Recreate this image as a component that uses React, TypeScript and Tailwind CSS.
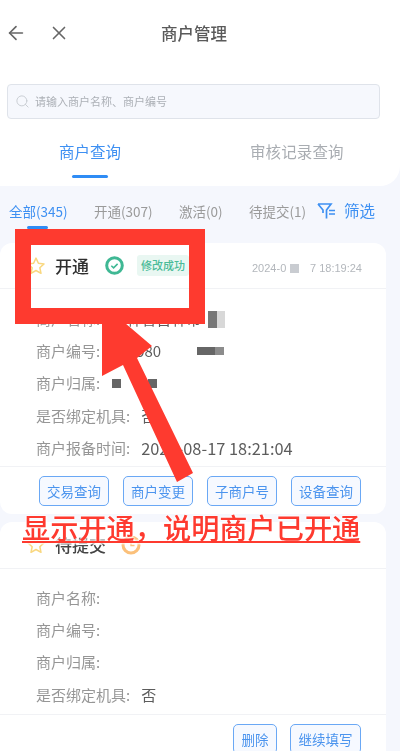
import { ArrowLeft, Search, X } from "lucide-react";

const font = { fontFamily: '"Noto Sans CJK SC", "Noto Sans", sans-serif' };

function Star() {
  return (
    <svg width="20" height="20" viewBox="0 0 24 24" fill="none" stroke="#f9d77e" strokeWidth="1.8" strokeLinejoin="round">
      <path d="M12 2.5l2.9 6.2 6.7.8-5 4.6 1.4 6.7-6-3.4-6 3.4 1.4-6.7-5-4.6 6.7-.8z" />
    </svg>
  );
}

function Row({ label, value, children }: { label: string; value?: string; children?: React.ReactNode }) {
  return (
    <div className="flex items-center h-[32.3px] text-[15px] whitespace-nowrap">
      <span className="text-[#969696]">{label}</span>
      {value && <span className="text-[#5c5c5c] ml-[11px]">{value}</span>}
      {children}
    </div>
  );
}

function Btn({ text, w }: { text: string; w: string }) {
  return (
    <button className={`${w} h-[30px] rounded-[5px] border-[1.5px] border-[#6aa8f5] bg-[#f6f9ff] text-[13.5px] text-[#4b94ee]`}>
      {text}
    </button>
  );
}

export default function App() {
  return (
    <div className="relative w-[400px] h-[751px] overflow-hidden bg-[#f5f7fd]" style={font}>
      <div className="blur-[0.5px]">
        <div className="h-[186px] bg-white rounded-br-[20px] flex flex-col">
          <div className="relative flex items-center h-[66px] px-[5px]">
            <ArrowLeft size={22} strokeWidth={1.8} className="text-[#666]" />
            <X size={22} strokeWidth={1.8} className="text-[#666] ml-[21px]" />
            <span className="absolute left-[161px] text-[16.5px] font-medium text-[#5a5a5a]">商户管理</span>
          </div>
          <div className="mx-[7px] mt-[18px] w-[373px] h-[35px] rounded-[4px] border border-[#dfe3ea] bg-[#f6f8fd] flex items-center pl-[7px]">
            <Search size={15} strokeWidth={1.4} className="text-[#c4c8ce]" />
            <span className="ml-[5px] text-[11px] text-[#acb0b6]">请输入商户名称、商户编号</span>
          </div>
          <div className="flex mt-[19px] text-[15.5px]">
            <div className="w-[180px] flex flex-col items-center">
              <span className="text-[#3e90f2] leading-[26px]">商户查询</span>
              <div className="mt-[11px] w-[36px] h-[3px] rounded-full bg-[#2f8cf5]" />
            </div>
            <span className="ml-[70px] text-[#a9adb2] leading-[26px] tracking-[0.1px]">审核记录查询</span>
          </div>
        </div>

        <div className="flex items-center h-[57px] pb-[7px] text-[13.5px] text-[#9a9a9a] whitespace-nowrap relative">
          <div className="ml-[9px] w-[59px] relative text-[#3e90f2]">
            全部(345)
            <div className="absolute left-[18px] top-[25px] w-[21px] h-[3px] rounded-full bg-[#2f8cf5]" />
          </div>
          <span className="ml-[26px] w-[59px]">开通(307)</span>
          <span className="ml-[26px] w-[44px]">激活(0)</span>
          <span className="ml-[26px] w-[55px]">待提交(1)</span>
          <svg className="ml-[13px]" width="20" height="18" viewBox="0 0 20 18" fill="none" stroke="#3e90f2" strokeWidth="1.7">
            <path d="M1 2h13L9.5 8v8.500M1 2l5 6v3" />
            <path d="M12 8.500h6M12 12h6" />
          </svg>
          <span className="ml-[7px] text-[15.5px] text-[#3e90f2]">筛选</span>
        </div>

        <div className="w-[386px] h-[271px] bg-white rounded-[12px] flex flex-col">
          <div className="h-[46px] flex items-center border-b border-[#f1f2f5] relative">
            <span className="ml-[26px]"><Star /></span>
            <span className="ml-[9px] text-[17px] font-medium text-[#2e2e2e]">开通</span>
            <svg className="ml-[16px]" width="19" height="19" viewBox="0 0 19 19" fill="none">
              <circle cx="9.500" cy="9.500" r="7.800" stroke="#3fb894" strokeWidth="3" />
              <path d="M6.300 9.700l2.300 2.200 4-4" stroke="#3fb894" strokeWidth="1.500" />
            </svg>
            <span className="ml-[13px] w-[52px] h-[21px] rounded-[3px] bg-[#e9f7f2] text-[11px] font-medium text-[#4bbb98] flex items-center justify-center whitespace-nowrap">修改成功</span>
            <span className="absolute left-[252px] top-[17px] text-[11px] leading-[16px] text-[#b3b7bc]" style={{ fontFamily: '"Liberation Sans", sans-serif' }}>
              2024-0
            </span>
            <span className="absolute left-[290px] top-[21px] w-[9px] h-[9px] bg-[#c9ccd1]" />
            <span className="absolute left-[310px] top-[17px] text-[11px] leading-[16px] text-[#b3b7bc]" style={{ fontFamily: '"Liberation Sans", sans-serif' }}>
              7 18:19:24
            </span>
          </div>
          <div className="pl-[36px] pt-[14px] h-[177px]">
            <Row label="商户名称:" value="吉林省吉林市">
              <span className="ml-[7px] w-[9px] h-[17px] bg-[#777]" />
              <span className="w-[8px] h-[17px] bg-[#d8d8d8]" />
            </Row>
            <Row label="商户编号:" value="898980">
              <span className="ml-[36px] w-[18px] h-[8px] bg-[#666]" />
              <span className="w-[9px] h-[8px] bg-[#8c8c8c]" />
            </Row>
            <Row label="商户归属:">
              <span className="ml-[12px] w-[9px] h-[9px] bg-[#666]" />
              <span className="ml-[27px] w-[9px] h-[9px] bg-[#666]" />
            </Row>
            <Row label="是否绑定机具:" value="否" />
            <Row label="商户报备时间:">
              <span className="ml-[11px] text-[16.4px] text-[#5c5c5c]">2024-08-17 18:21:04</span>
            </Row>
          </div>
          <div className="flex-1 border-t border-[#f1f2f5] flex items-start justify-end gap-[14px] pt-[9px] pr-[25px]">
            <Btn text="交易查询" w="w-[70px]" />
            <Btn text="商户变更" w="w-[70px]" />
            <Btn text="子商户号" w="w-[70px]" />
            <Btn text="设备查询" w="w-[70px]" />
          </div>
        </div>

        <div className="mt-[8px] w-[386px] h-[240px] bg-white rounded-t-[12px] flex flex-col">
          <div className="h-[47px] flex items-center border-b border-[#f1f2f5]">
            <span className="ml-[26px]"><Star /></span>
            <span className="ml-[9px] text-[17px] font-medium text-[#444]">待提交</span>
            <svg className="ml-[15px]" width="20" height="20" viewBox="0 0 20 20" fill="none">
              <circle cx="10" cy="10" r="8" stroke="#fbc07a" strokeWidth="3" />
              <path d="M10 6v4.500h3.500" stroke="#fbc07a" strokeWidth="1.400" />
            </svg>
          </div>
          <div className="pl-[36px] pt-[13px] h-[145px]">
            <Row label="商户名称:" />
            <Row label="商户编号:" />
            <Row label="商户归属:" />
            <Row label="是否绑定机具:" value="否" />
          </div>
          <div className="flex-1 border-t border-[#f1f2f5] flex items-start justify-end gap-[13px] pt-[9px] pr-[25px]">
            <Btn text="删除" w="w-[44px]" />
            <Btn text="继续填写" w="w-[71px]" />
          </div>
        </div>
      </div>

      {/* red annotations on top of the screenshot */}
      <div className="absolute left-[15px] top-[229px] w-[190px] h-[95px] border-[16px] border-[#fe3a2f]" />
      <svg className="absolute left-0 top-0" width="400" height="751" viewBox="0 0 400 751">
        <path d="M102 323L125 323L152 346L137 358L193 473L177 482L123 365L102 376Z" fill="#fe3a2f" />
      </svg>
      <div
        className="absolute left-[22px] top-[510px] text-[28.200px] leading-[34px] font-medium text-[#fe3a2f] underline underline-offset-[2px] whitespace-nowrap [text-shadow:0_0_2px_#fff,0_0_2px_#fff,0_0_3px_#fff]"
      >
        显示开通，说明商户已开通
      </div>
    </div>
  );
}
